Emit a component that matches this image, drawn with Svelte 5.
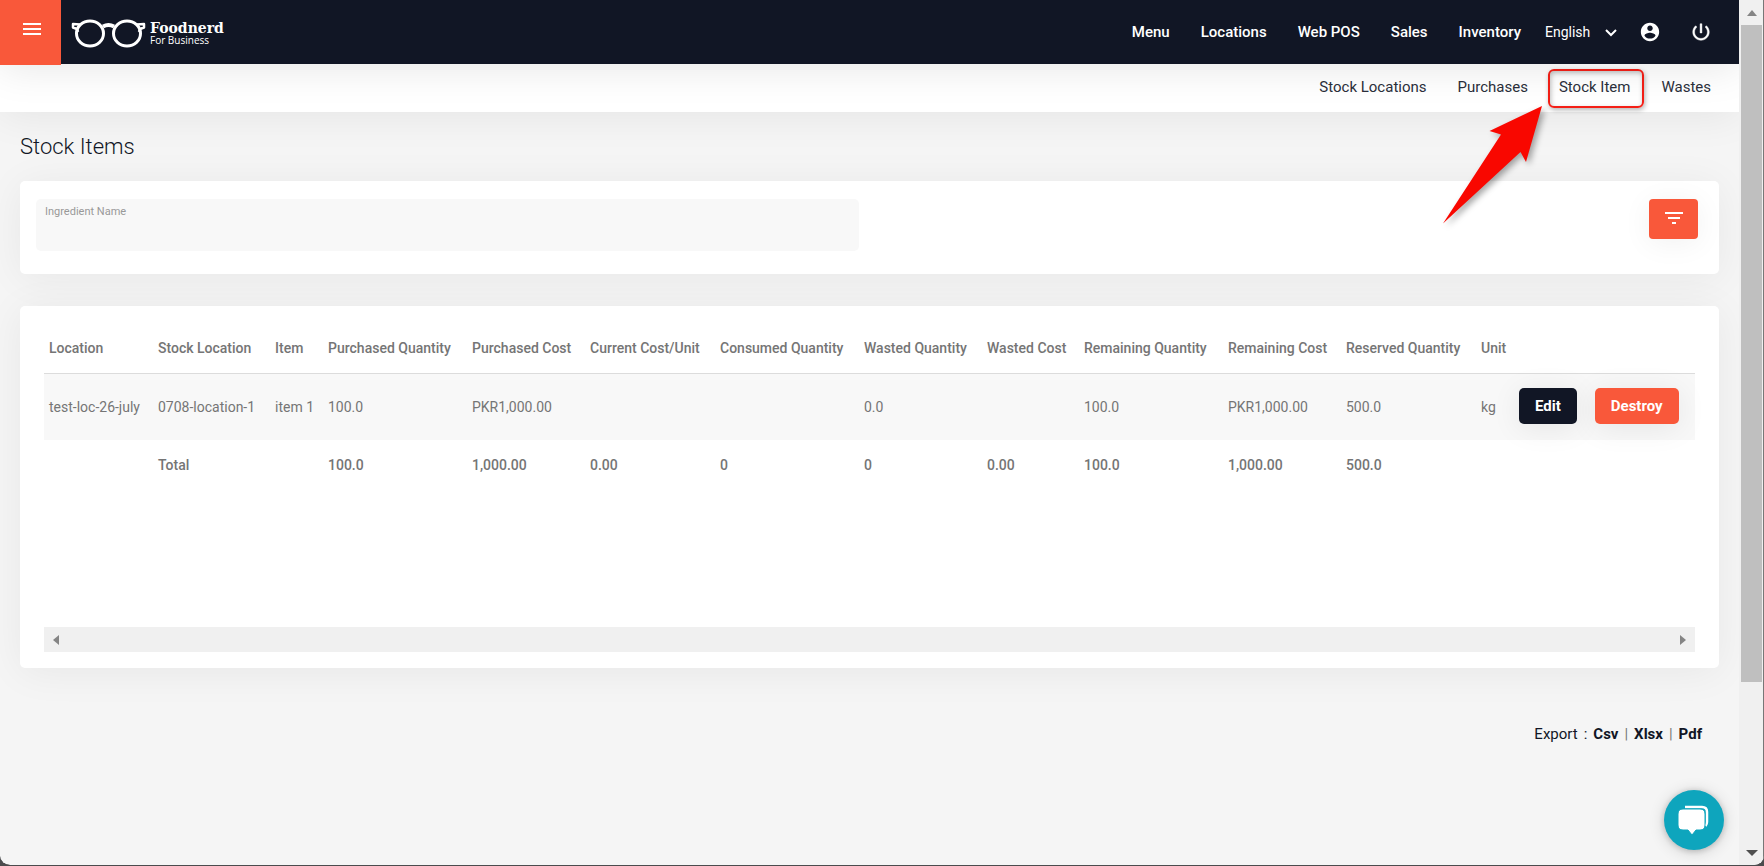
<script>
  const navLinks = ['Menu', 'Locations', 'Web POS', 'Sales', 'Inventory'];
  const subLinks = ['Stock Locations', 'Purchases', 'Stock Item', 'Wastes'];
  const exports = ['Csv', 'Xlsx', 'Pdf'];

  const columns = [
    { title: 'Location', size: 109, value: 'test-loc-26-july', total: '' },
    { title: 'Stock Location', size: 117, value: '0708-location-1', total: 'Total' },
    { title: 'Item', size: 53, value: 'item 1', total: '' },
    { title: 'Purchased Quantity', size: 144, value: '100.0', total: '100.0' },
    { title: 'Purchased Cost', size: 118, value: 'PKR1,000.00', total: '1,000.00' },
    { title: 'Current Cost/Unit', size: 130, value: '', total: '0.00' },
    { title: 'Consumed Quantity', size: 144, value: '', total: '0' },
    { title: 'Wasted Quantity', size: 123, value: '0.0', total: '0' },
    { title: 'Wasted Cost', size: 97, value: '', total: '0.00' },
    { title: 'Remaining Quantity', size: 144, value: '100.0', total: '100.0' },
    { title: 'Remaining Cost', size: 118, value: 'PKR1,000.00', total: '1,000.00' },
    { title: 'Reserved Quantity', size: 135, value: '500.0', total: '500.0' },
    { title: 'Unit', size: 38, value: 'kg', total: '' },
    { title: '', size: 181, value: '', total: '' }
  ];
  const dataColumns = columns.slice(0, -1);
  const totalSize = columns.reduce((sum, c) => sum + c.size, 0);

  let ingredient = $state('');
  let language = $state('English');
</script>

<div class="window">
  <div class="page">
    <header class="topbar">
      <button class="menu-toggle" aria-label="Toggle menu">
        <svg width="18" height="12" viewBox="0 0 18 12"><path d="M0 1h18M0 6h18M0 11h18" stroke="#fff" stroke-width="2" /></svg>
      </button>
      <a class="brand" href="#home">
        <svg width="76" height="30" viewBox="0 0 76 30" fill="none" stroke="#fff">
          <ellipse cx="19" cy="15.500" rx="13.500" ry="12.500" stroke-width="3" />
          <ellipse cx="56" cy="15.500" rx="13.500" ry="12.500" stroke-width="3" />
          <path d="M32 8.500Q37.500 5.500 43 8.500" stroke-width="4" />
          <path d="M9 6.500 2 6v3.500l4 1.500 1 3M66 6.500l7-.5v3.500l-4 1.500-1 3" stroke-width="2.500" stroke-linejoin="round" />
        </svg>
        <span class="brand-text">
          <span class="brand-name">Foodnerd</span>
          <span class="brand-sub">For Business</span>
        </span>
      </a>
      <nav class="main-nav">
        {#each navLinks as link}<a href="#{link}">{link}</a>{/each}
      </nav>
      <div class="language">
        <select aria-label="Language" bind:value={language}>
          <option>English</option>
        </select>
        <svg width="12" height="8" viewBox="0 0 12 8"><path d="M1 1l5 5 5-5" fill="none" stroke="#fff" stroke-width="2" /></svg>
      </div>
      <a class="icon-link account" href="#account" aria-label="Account">
        <svg width="22" height="22" viewBox="0 0 24 24"><path fill="#fff" d="M12 2C6.480 2 2 6.480 2 12s4.480 10 10 10 10-4.480 10-10S17.520 2 12 2zm0 3c1.660 0 3 1.340 3 3s-1.340 3-3 3-3-1.340-3-3 1.340-3 3-3zm0 14.200c-2.500 0-4.710-1.280-6-3.220.03-1.990 4-3.080 6-3.080 1.990 0 5.970 1.090 6 3.080-1.290 1.940-3.500 3.220-6 3.220z" /></svg>
      </a>
      <a class="icon-link" href="#logout" aria-label="Log out">
        <svg width="22" height="22" viewBox="0 0 24 24"><path fill="#fff" stroke="#fff" stroke-width=".5" d="M13 3h-2v10h2V3zm4.830 2.170-1.420 1.420C17.990 7.860 19 9.810 19 12c0 3.870-3.130 7-7 7s-7-3.130-7-7c0-2.190 1.010-4.140 2.580-5.420L6.170 5.170C4.230 6.820 3 9.260 3 12c0 4.970 4.030 9 9 9s9-4.030 9-9c0-2.740-1.230-5.180-3.170-6.830z" /></svg>
      </a>
    </header>

    <nav class="subnav">
      {#each subLinks as link}
        <a href="#{link}" class:marked={link === 'Stock Item'}>
          {link}
          {#if link === 'Stock Item'}
            <svg class="arrow" width="104" height="122" viewBox="0 0 104 122"><path fill="#f90700" d="M101 2 48.500 27 60 30.500 2 119.500 79.500 48 85 58Z" /></svg>
          {/if}
        </a>
      {/each}
    </nav>

    <main>
      <h1>Stock Items</h1>

      <form class="card filter" onsubmit={(e) => e.preventDefault()}>
        <div class="field">
          <label for="ingredient">Ingredient Name</label>
          <input id="ingredient" type="text" bind:value={ingredient} />
        </div>
        <button class="filter-button" aria-label="Filter">
          <svg width="18" height="12" viewBox="0 0 18 12"><path d="M0 1h18M3 6h12M7 11h4" stroke="#fff" stroke-width="2" /></svg>
        </button>
      </form>

      <section class="card stock">
        <div class="table-area">
          <table>
            <colgroup>
              {#each columns as c}<col style="width: {(c.size / totalSize) * 100}%" />{/each}
            </colgroup>
            <thead>
              <tr>{#each columns as c}<th>{c.title}</th>{/each}</tr>
            </thead>
            <tbody>
              <tr class="item">
                {#each dataColumns as c}<td>{c.value}</td>{/each}
                <td>
                  <div class="actions">
                    <button class="edit">Edit</button>
                    <button class="destroy">Destroy</button>
                  </div>
                </td>
              </tr>
              <tr class="total">{#each columns as c}<td>{c.total}</td>{/each}</tr>
            </tbody>
          </table>
        </div>
        <div class="hscroll" aria-hidden="true">
          <svg width="6" height="10" viewBox="0 0 6 10"><path d="M6 0v10L0 5z" fill="#858585" /></svg>
          <svg width="6" height="10" viewBox="0 0 6 10"><path d="M0 0v10l6-5z" fill="#858585" /></svg>
        </div>
      </section>

      <p class="export">
        <span>Export</span><span>:</span>
        {#each exports as kind, i}
          {#if i}<span class="bar">|</span>{/if}<a href="#{kind}">{kind}</a>
        {/each}
      </p>
    </main>

    <button class="chat" aria-label="Open chat">
      <svg width="32" height="30" viewBox="0 0 32 30">
        <path d="M7 2h17q5 0 5 5v10q0 2-1.500 4" fill="none" stroke="#fff" stroke-width="2.500" />
        <path fill="#fff" stroke="#0ea5bd" stroke-width="1" d="M5 4h17q5 0 5 5v11q0 5-5 5h-4l-4 5-4-5H5q-5 0-5-5V9q0-5 5-5z" />
      </svg>
    </button>
  </div>

  <div class="vscroll" aria-hidden="true">
    <div class="cap"><svg width="10" height="6" viewBox="0 0 10 6"><path d="M5 0l5 6H0z" fill="#858585" /></svg></div>
    <div class="thumb"></div>
    <div class="track"><svg width="12" height="6" viewBox="0 0 12 6"><path d="M0 0h12L6 6z" fill="#4f4f4f" /></svg></div>
  </div>
</div>

<style>
  :global(body) {
    background: #4b4b4d;
  }
  .window {
    box-sizing: border-box;
    display: flex;
    min-height: 100vh;
    border-bottom: 1px solid #4b4b4d;
    border-radius: 0 0 10px 10px;
    overflow: hidden;
    background: #f5f5f5;
    background-clip: padding-box;
    color: #111625;
    font-family: Roboto, sans-serif;
    font-size: 14px;
  }
  .page {
    position: relative;
    flex: 1;
    min-width: 0;
    display: flex;
    flex-direction: column;
  }
  a {
    color: inherit;
    text-decoration: none;
  }
  button {
    padding: 0;
    border: 0;
    font: inherit;
    cursor: pointer;
  }
  svg {
    display: block;
    flex: none;
  }

  .topbar {
    position: relative;
    z-index: 1;
    display: flex;
    align-items: center;
    height: 64px;
    padding-right: 27px;
    background: #111625;
    color: #fff;
    box-shadow: 0 4px 40px rgba(0, 0, 0, 0.1);
  }
  .menu-toggle {
    align-self: flex-start;
    display: flex;
    justify-content: center;
    width: 61px;
    height: 65px;
    padding: 23px 0 0 3px;
    background: #f9583a;
  }
  .brand {
    display: flex;
    align-items: center;
    gap: 3px;
    margin: 2px auto 0 10px;
  }
  .brand-text {
    display: flex;
    flex-direction: column;
  }
  .brand-name {
    font: bold 14px/14px "DejaVu Serif", serif;
  }
  .brand-sub {
    font: 10px/10px "Open Sans", sans-serif;
  }
  .main-nav {
    display: flex;
    gap: 31px;
    font-size: 15px;
    font-weight: 500;
  }
  .language {
    position: relative;
    width: 72px;
    margin: 0 22px 0 24px;
  }
  .language select {
    width: 100%;
    padding: 0;
    border: 0;
    appearance: none;
    background: transparent;
    color: #fff;
    font: 14px/20px Roboto, sans-serif;
  }
  .language svg {
    position: absolute;
    top: 7px;
    right: 0;
    pointer-events: none;
  }
  .account {
    margin-right: 29px;
  }

  .subnav {
    display: flex;
    justify-content: flex-end;
    align-items: center;
    gap: 31px;
    height: 48px;
    padding-right: 28px;
    background: #fff;
    box-shadow: 0 4px 40px rgba(0, 0, 0, 0.07);
    color: #2b2f3b;
    font-size: 15px;
    font-weight: 400;
    line-height: 20px;
  }
  .subnav a {
    position: relative;
    padding-bottom: 2px;
  }
  .marked::after {
    content: '';
    position: absolute;
    inset: -8px -14px -9px -11px;
    border: 2px solid #f41f16;
    border-radius: 6px;
    box-shadow: 1px 2px 5px rgba(0, 0, 0, 0.3), inset 1px 2px 5px rgba(0, 0, 0, 0.25);
  }
  .arrow {
    position: absolute;
    z-index: 2;
    top: 27px;
    right: 85px;
    filter: drop-shadow(3px 3px 3px rgba(0, 0, 0, 0.35));
    pointer-events: none;
  }

  main {
    padding: 21px 20px 20px;
  }
  h1 {
    margin: 0 0 20px;
    font-size: 22px;
    font-weight: 300;
    line-height: 28px;
  }
  .card {
    border-radius: 5px;
    background: #fff;
    box-shadow: 0 4px 40px rgba(0, 0, 0, 0.06);
  }
  .filter {
    display: flex;
    justify-content: space-between;
    align-items: flex-start;
    margin-bottom: 32px;
    padding: 18px 21px 23px 16px;
  }
  .field {
    display: flex;
    flex-direction: column;
    box-sizing: border-box;
    width: 49.500%;
    height: 52px;
    padding: 6px 9px;
    border-radius: 5px;
    background: #f8f8f8;
  }
  .field label {
    color: #999;
    font-size: 11px;
    line-height: 14px;
  }
  .field input {
    flex: 1;
    min-height: 0;
    padding: 0;
    border: 0;
    outline: 0;
    background: transparent;
    font: inherit;
  }
  .filter-button {
    display: flex;
    justify-content: center;
    width: 49px;
    height: 40px;
    padding-top: 13px;
    border-radius: 4px;
    background: #f9583a;
    box-shadow: 0 4px 30px rgba(0, 0, 0, 0.06);
  }

  .stock {
    padding: 16px 24px;
  }
  .table-area {
    min-height: 305px;
  }
  table {
    width: 100%;
    border-collapse: collapse;
    table-layout: fixed;
    color: #757575;
  }
  th,
  td {
    padding: 0 0 0 5px;
    text-align: left;
    white-space: nowrap;
    line-height: 20px;
  }
  th {
    height: 51px;
    border-bottom: 1px solid #dcdcdc;
    font-weight: 500;
  }
  .item {
    height: 66px;
    background: #f8f8f8;
  }
  .total {
    height: 50px;
    font-weight: 500;
  }
  .actions {
    display: flex;
    gap: 18px;
    padding-bottom: 1px;
  }
  .actions button {
    height: 36px;
    padding: 0 16px;
    border-radius: 5px;
    color: #fff;
    font-size: 15px;
    font-weight: 700;
    box-shadow: 0 4px 30px rgba(0, 0, 0, 0.08);
  }
  .actions .edit {
    background: #111625;
  }
  .actions .destroy {
    background: #f9583a;
  }
  .hscroll {
    display: flex;
    justify-content: space-between;
    align-items: center;
    height: 25px;
    padding: 0 9px;
    background: #f0f0f0;
  }

  .export {
    display: flex;
    justify-content: flex-end;
    gap: 6px;
    margin: 56px 17px 0 0;
    font-size: 15px;
    line-height: 20px;
  }
  .export a {
    font-weight: 700;
  }
  .export .bar {
    color: #777;
  }

  .chat {
    position: fixed;
    right: 40px;
    bottom: 16px;
    display: grid;
    place-items: center;
    width: 60px;
    height: 60px;
    border-radius: 50%;
    background: #0ea5bd;
    box-shadow: 0 1px 6px rgba(0, 0, 0, 0.2), 0 2px 16px rgba(0, 0, 0, 0.16);
  }

  .vscroll {
    position: relative;
    z-index: 2;
    display: flex;
    flex-direction: column;
    width: 21px;
    padding: 0 2px;
    background: linear-gradient(to left, #777 1px, #f0f0f0 1px);
  }
  .cap {
    display: grid;
    place-items: center;
    height: 25px;
  }
  .thumb {
    flex: 657;
    background: #bfbfbf;
  }
  .track {
    box-sizing: border-box;
    flex: 183;
    display: flex;
    justify-content: center;
    align-items: flex-end;
  }
  .track svg {
    margin-bottom: 9px;
  }
</style>
